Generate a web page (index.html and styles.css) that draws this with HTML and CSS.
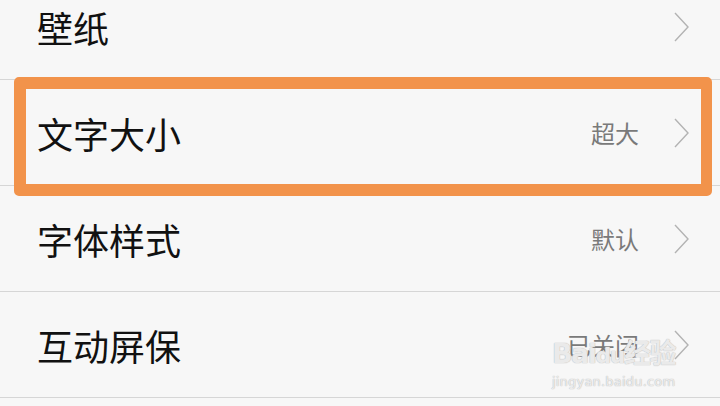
FILE: index.html
```html
<!DOCTYPE html>
<html lang="zh-CN">
<head>
    <meta charset="UTF-8">
    <meta name="viewport" content="width=device-width, initial-scale=1.0">
    <title>显示设置</title>
    <link rel="stylesheet" href="styles.css">
</head>
<body>
    <ul class="settings">
        <li class="row">
            <span class="label">壁纸</span>
            <span class="value"></span>
            <svg class="chevron" viewBox="0 0 16 30"><polyline points="1,1 14,15 1,29"/></svg>
        </li>
        <li class="row highlight">
            <span class="label">文字大小</span>
            <span class="value">超大</span>
            <svg class="chevron" viewBox="0 0 16 30"><polyline points="1,1 14,15 1,29"/></svg>
        </li>
        <li class="row">
            <span class="label">字体样式</span>
            <span class="value">默认</span>
            <svg class="chevron" viewBox="0 0 16 30"><polyline points="1,1 14,15 1,29"/></svg>
        </li>
        <li class="row">
            <span class="label">互动屏保</span>
            <span class="value">已关闭</span>
            <svg class="chevron" viewBox="0 0 16 30"><polyline points="1,1 14,15 1,29"/></svg>
        </li>
    </ul>

    <!-- watermark from the screenshot source -->
    <div class="watermark">
        <div class="brand">Bai<span class="paw">du</span>经验</div>
        <div class="site">jingyan.baidu.com</div>
    </div>
</body>
</html>
```

FILE: styles.css
```css
html, body {
    margin: 0;
    padding: 0;
    background: #f7f7f7;
    overflow: hidden;
    height: 406px;
}
body {
    font-family: "Noto Sans CJK SC", "Noto Sans", sans-serif;
    position: relative;
}
.settings {
    list-style: none;
    margin: -26px 0 0 0;
    padding: 0;
}
.row {
    position: relative;
    display: flex;
    align-items: center;
    height: 105px;
    padding: 0 31px 0 37px;
    border-bottom: 1px solid #d6d6d6;
}
.label {
    flex: 1;
    font-size: 36px;
    color: #111;
    line-height: 1;
}
.value {
    font-size: 24px;
    color: #7a7a7a;
    margin-right: 35px;
    line-height: 1;
}
.chevron {
    width: 16px;
    height: 30px;
    margin-right: -1px;
}
.chevron polyline {
    fill: none;
    stroke: #b3b3b3;
    stroke-width: 1.4;
}
.highlight::after {
    content: "";
    position: absolute;
    top: -3px;
    left: 14px;
    right: 8px;
    bottom: -11px;
    border: 12px solid #f2934b;
    border-right-width: 11px;
    border-radius: 5px;
}
.watermark {
    position: absolute;
    left: 552px;
    top: 337px;
    color: rgba(255, 255, 255, 0.7);
    text-shadow: 0 0 1px #bdbdbd, 0 0 1px #bdbdbd;
    font-family: "DejaVu Sans", "Noto Sans CJK SC", sans-serif;
}
.brand {
    font-size: 27px;
    font-weight: bold;
    line-height: 34px;
    letter-spacing: -1.5px;
}
.paw {
    font-size: 22px;
}
.site {
    font-size: 13px;
    line-height: 18px;
    letter-spacing: 0.2px;
}
```
